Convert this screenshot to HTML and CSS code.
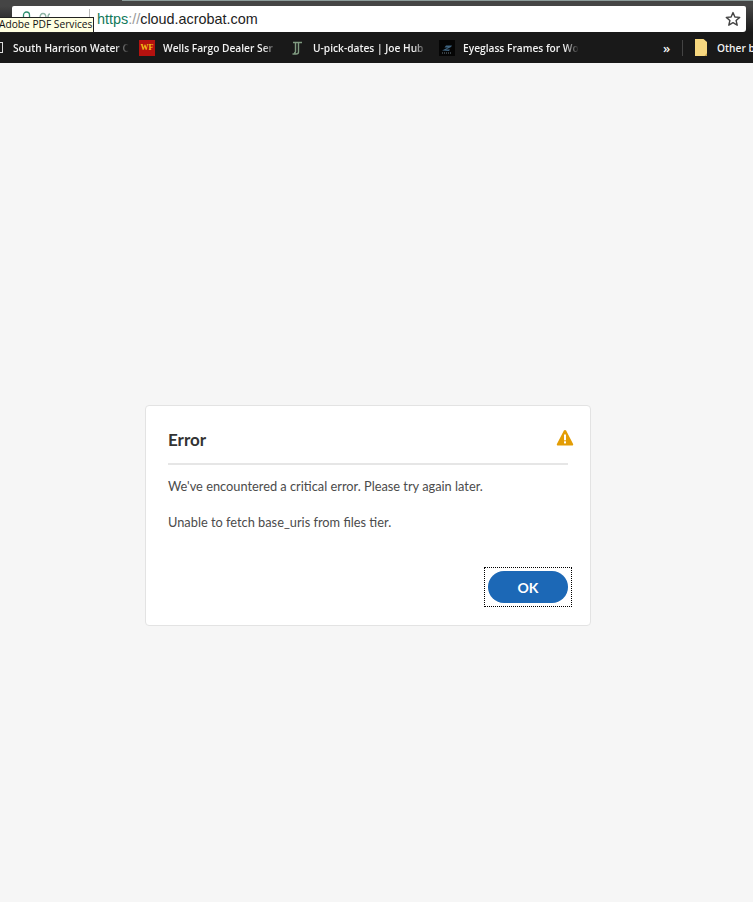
FILE: index.html
```html
<!DOCTYPE html>
<html lang="en">

<head>
  <meta charset="UTF-8">
  <meta name="viewport" content="width=device-width, initial-scale=1.0">
  <title>Adobe PDF Services</title>
  <link rel="stylesheet" href="styles.css">
</head>

<body>
  <div class="topstrip"><div class="tabline"></div></div>
  <div class="toolbar">
    <div class="omnibox">
      <svg class="secure-icon" width="30" height="8" viewBox="0 0 30 8">
        <path d="M1.500 7V4a3 3 0 0 1 6 0v3" fill="none" stroke="#2f8f6f" stroke-width="1.300"/>
        <path d="M18 7c0-3 1-4.500 3-4.500S24 4 24 7M26 7c0-3 .5-4 2-4" fill="none" stroke="#8fb5a6" stroke-width="1.300"/>
      </svg>
      <div class="secure"></div>
      <div class="url"><span class="scheme">https</span><span class="slashes">://</span>cloud.acrobat.com</div>
      <svg class="star" width="16" height="16" viewBox="0 0 16 16">
        <path d="M8 1.600l1.900 4.400 4.800.4-3.600 3.100 1.100 4.700L8 11.700l-4.200 2.500 1.100-4.700-3.600-3.100 4.800-.4z" fill="none" stroke="#444" stroke-width="1.400" stroke-linejoin="round"/>
      </svg>
    </div>
    <div class="tooltip">Adobe PDF Services</div>
  </div>
  <div class="bookmarks">
    <div class="cutoff-icon"></div>
    <div class="mark mark-water"><span class="mark-text">South Harrison Water C</span></div>
    <div class="mark mark-wf">
      <div class="wf-icon">WF</div>
      <span class="mark-text">Wells Fargo Dealer Ser</span>
    </div>
    <div class="mark mark-joe">
      <svg class="mark-icon" width="16" height="16" viewBox="0 0 16 16">
        <path d="M4 2.500h9M9.500 2.500v9.500c0 1.500-1 2-2.500 2H3.500M6.500 2.500v9c0 1-.5 1.500-1.500 1.500" fill="none" stroke="#7f9a80" stroke-width="1.400"/>
      </svg>
      <span class="mark-text">U-pick-dates | Joe Hub</span>
    </div>
    <div class="mark mark-eye">
      <svg class="eye-icon" width="16" height="16" viewBox="0 0 16 16">
        <rect width="16" height="16" fill="#050505"/>
        <path d="M3 10.500l6-3H5.500l1.500-2h6l-1 1.500-5 2.500h4l-1 1.500z" fill="#3f6480"/>
        <path d="M3 13h10" stroke="#6a7a84" stroke-width="1" stroke-dasharray="1 1"/>
      </svg>
      <span class="mark-text">Eyeglass Frames for Wo</span>
    </div>
    <div class="more">»</div>
    <div class="divider"></div>
    <svg class="folder" width="12" height="17" viewBox="0 0 12 17">
      <path d="M0 0h8.500l3.500 3v14H0z" fill="#f6d77f"/>
      <path d="M9.500 17L12 14v3z" fill="#c9a64c"/>
    </svg>
    <span class="other">Other b</span>
  </div>

  <div class="page">
    <div class="dialog">
      <div class="dialog-head">
        <h2 class="dialog-title">Error</h2>
        <svg class="alert" width="18" height="18" viewBox="0 0 18 18">
          <path d="M7.900 1.600a1.250 1.250 0 0 1 2.200 0l7 13.300a1.100 1.100 0 0 1-1 1.600H1.900a1.100 1.100 0 0 1-1-1.600z" fill="#e39d05"/>
          <rect x="8" y="5.500" width="2" height="5.800" fill="#fff"/>
          <rect x="8" y="12.300" width="2" height="2.100" fill="#fff"/>
        </svg>
      </div>
      <div class="dialog-body">
        <p>We've encountered a critical error. Please try again later.</p>
        <p>Unable to fetch base_uris from files tier.</p>
      </div>
      <div class="dialog-foot">
        <div class="focus-ring"><button class="ok-btn">OK</button></div>
      </div>
    </div>
  </div>
</body>

</html>
```

FILE: styles.css
```css
* {
  margin: 0;
  padding: 0;
  box-sizing: border-box;
}

html,
body {
  width: 753px;
  height: 902px;
  overflow: hidden;
}

body {
  display: flex;
  flex-direction: column;
  background-color: #f6f6f6;
  font-family: "Lato", sans-serif;
}

.topstrip {
  height: 6px;
  background-color: #454545;
}

.tabline {
  height: 1px;
  margin-left: 122px;
  background-color: #8c9c9a;
}

.toolbar {
  position: relative;
  height: 26px;
  padding-left: 12px;
  padding-right: 7px;
  background: linear-gradient(#454545, #191919);
}

.omnibox {
  display: flex;
  align-items: center;
  height: 26px;
  padding-left: 10px;
  padding-right: 5px;
  border-radius: 2px 2px 3px 0;
  background-color: #fff;
}

.secure-icon {
  flex-shrink: 0;
  margin-right: 37px;
  margin-bottom: 8px;
}

.secure {
  flex-shrink: 0;
  width: 1px;
  height: 20px;
  margin-right: 7px;
  background-color: #bbb;
}

.url {
  flex: 1;
  font-family: "Liberation Sans", sans-serif;
  font-size: 14.400px;
  color: #222;
}

.scheme {
  color: #12795a;
}

.slashes {
  color: #999;
}

.tooltip {
  position: absolute;
  left: -6px;
  top: 11px;
  width: 100px;
  height: 16px;
  padding-left: 4px;
  border: 1px solid #222;
  background-color: #ffffe1;
  font-family: "Open Sans", sans-serif;
  font-size: 10.200px;
  line-height: 13px;
  color: #111;
  white-space: nowrap;
}

.bookmarks {
  display: flex;
  align-items: center;
  height: 31px;
  background-color: #191919;
  font-family: "Open Sans", sans-serif;
  font-size: 10.200px;
  font-weight: 600;
  color: #f2f2f2;
  white-space: nowrap;
}

.cutoff-icon {
  flex-shrink: 0;
  width: 3px;
  height: 11px;
  border: 1px solid #ddd;
  border-left: 0;
}

.mark {
  display: flex;
  align-items: center;
  flex-shrink: 0;
  overflow: hidden;
}

.mark-text {
  flex: 1;
  overflow: hidden;
  -webkit-mask-image: linear-gradient(to right, #000 88%, transparent);
  mask-image: linear-gradient(to right, #000 88%, transparent);
}

.mark-water {
  width: 116px;
  margin-left: 10px;
  margin-right: 10px;
}

.mark-wf {
  width: 138px;
  margin-right: 12px;
}

.wf-icon {
  width: 16px;
  height: 16px;
  margin-right: 8px;
  flex-shrink: 0;
  background-color: #b5120f;
  font-family: "Liberation Serif", serif;
  font-size: 8px;
  font-weight: bold;
  line-height: 16px;
  text-align: center;
  color: #f5c518;
}

.mark-joe {
  width: 138px;
  margin-right: 12px;
}

.mark-icon,
.eye-icon {
  margin-right: 8px;
  flex-shrink: 0;
}

.mark-eye {
  width: 140px;
}

.more {
  flex-shrink: 0;
  width: 9px;
  margin-left: 84px;
  font-size: 13px;
  line-height: 14px;
}

.divider {
  flex-shrink: 0;
  width: 1px;
  height: 16px;
  margin-left: 10px;
  margin-right: 12px;
  background-color: #444;
}

.folder {
  flex-shrink: 0;
  margin-right: 10px;
}

.other {
  flex-shrink: 0;
}

.page {
  flex: 1;
  padding-top: 342px;
  padding-left: 145px;
}

.dialog {
  width: 446px;
  height: 221px;
  padding: 22px 22px 0;
  border: 1px solid #e3e3e3;
  border-radius: 4px;
  background-color: #fff;
}

.dialog-head {
  position: relative;
  display: flex;
  justify-content: space-between;
  height: 37px;
  border-bottom: 2px solid #e6e6e6;
}

.dialog-title {
  font-size: 17px;
  font-weight: 700;
  line-height: 24px;
  color: #333;
}

.alert {
  position: absolute;
  right: -6px;
  top: 1px;
}

.dialog-body {
  height: 102px;
  padding-top: 11px;
  font-size: 12.800px;
  line-height: 20px;
  color: #4b4b4b;
}

.dialog-body p {
  margin-bottom: 16px;
}

.dialog-foot {
  display: flex;
  justify-content: flex-end;
  margin-right: -4px;
}

.focus-ring {
  width: 88px;
  height: 40px;
  padding: 3px;
  border: 1px dotted #000;
}

.ok-btn {
  display: block;
  width: 80px;
  height: 32px;
  border: 0;
  border-radius: 16px;
  background-color: #1c68b6;
  font-family: "Lato", sans-serif;
  font-size: 14px;
  font-weight: 700;
  color: #fff;
}
```
